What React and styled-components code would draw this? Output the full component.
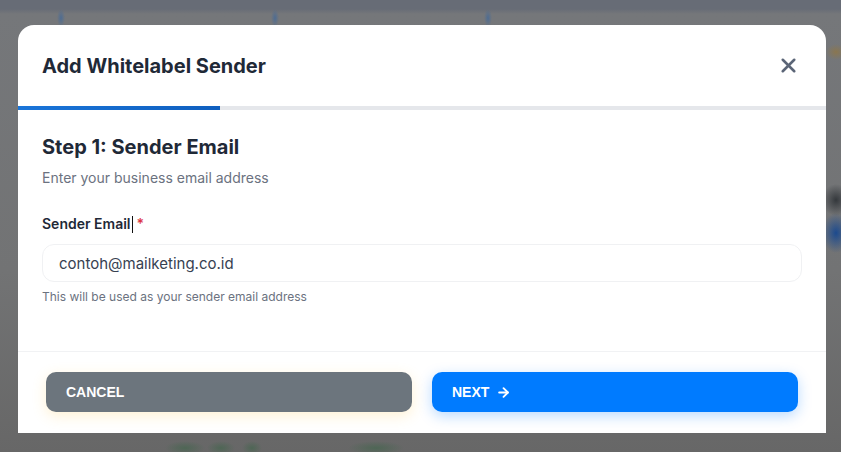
import React from 'react';
import styled, { createGlobalStyle } from 'styled-components';
import { X, ArrowRight } from 'lucide-react';

const Global = createGlobalStyle`
  html, body { margin: 0; padding: 0; }
  body { font-family: Inter, "Noto Sans", sans-serif; overflow: hidden; }
`;

// blurred page behind the dialog, only hinted with soft colour patches
const Backdrop = styled.div`
  width: 841px;
  height: 452px;
  box-sizing: border-box;
  padding: 25px 15px 0 18px;
  background:
    radial-gradient(4px 9px at 61px 18px, #4e6c92, transparent),
    radial-gradient(4px 9px at 275px 18px, #4e6c92, transparent),
    radial-gradient(4px 9px at 488px 18px, #4e6c92, transparent),
    radial-gradient(10px 8px at 836px 52px, #8a7650, transparent),
    radial-gradient(14px 16px at 836px 200px, #34383c, transparent),
    radial-gradient(14px 20px at 836px 233px, #1c4a8e, transparent),
    radial-gradient(20px 7px at 185px 448px, #4e6655, transparent),
    radial-gradient(14px 7px at 221px 448px, #4e6655, transparent),
    radial-gradient(10px 7px at 252px 448px, #4e6655, transparent),
    radial-gradient(28px 7px at 376px 448px, #4e6655, transparent),
    linear-gradient(180deg, #676c76 0px, #676c76 9px, #75777a 14px, #727374 60%, #676767 100%);
  overflow: hidden;
`;

const Modal = styled.div`
  width: 808px;
  height: 408px;
  background: #fff;
  border-radius: 16px 16px 0 0;
  overflow: hidden;
  display: flex;
  flex-direction: column;
`;

const Header = styled.div`
  height: 81px;
  display: flex;
  align-items: center;
  justify-content: space-between;
  padding: 0 26px 0 24px;
  flex-shrink: 0;
`;

const Title = styled.h2`
  margin: 0;
  font-size: 20px;
  font-weight: 700;
  color: #1f2937;
`;

const CloseButton = styled.button`
  border: 0;
  background: none;
  padding: 0;
  display: flex;
  color: #5b6577;
  cursor: pointer;
`;

const Track = styled.div`
  height: 4px;
  background: #e5e7eb;
  flex-shrink: 0;
`;

const Fill = styled.div`
  height: 100%;
  background: linear-gradient(90deg, #1a75d9, #0f5fbf);
`;

const Body = styled.div`
  height: 241px;
  box-sizing: border-box;
  padding: 23px 24px 0 24px;
  flex-shrink: 0;
`;

const StepTitle = styled.h3`
  margin: 0;
  font-size: 20px;
  line-height: 28px;
  font-weight: 700;
  color: #1f2937;
`;

const Subtitle = styled.p`
  margin: 7px 0 0;
  font-size: 14px;
  line-height: 20px;
  color: #6b7280;
`;

const Label = styled.label`
  display: flex;
  align-items: center;
  margin-top: 26px;
  font-size: 14px;
  line-height: 20px;
  font-weight: 600;
  color: #1f2937;
`;

const Caret = styled.span`
  display: inline-block;
  width: 1px;
  height: 17px;
  background: #111;
  margin-left: 1px;
`;

const Required = styled.span`
  color: #dc3545;
  margin-left: 4px;
`;

const Input = styled.input`
  display: block;
  box-sizing: border-box;
  width: 760px;
  height: 38px;
  margin-top: 10px;
  padding: 0 16px;
  border: 1px solid #f0f1f3;
  border-radius: 12px;
  font-family: Inter, sans-serif;
  font-size: 15px;
  color: #374151;
  outline: none;
  background: #fff;
`;

const Hint = styled.p`
  margin: 7px 0 0;
  font-size: 12px;
  line-height: 16px;
  color: #6b7280;
`;

const Footer = styled.div`
  border-top: 1px solid #f1f2f4;
  padding: 20px 28px 0;
  display: grid;
  grid-template-columns: 1fr 1fr;
  gap: 20px;
`;

const ActionButton = styled.button`
  height: 40px;
  border: 0;
  border-radius: 10px;
  display: flex;
  align-items: center;
  gap: 7px;
  padding: 0 20px;
  font-family: "Liberation Sans", Arial, sans-serif;
  font-weight: 700;
  font-size: 14px;
  color: #fff;
  text-transform: uppercase;
  background: ${p => (p.$primary ? '#007bff' : '#6c757d')};
  box-shadow: ${p =>
    p.$primary
      ? '0 4px 14px rgba(0, 123, 255, 0.28)'
      : '0 4px 14px rgba(255, 196, 60, 0.22)'};
`;

const step = 1;
const totalSteps = 4;

export default function App() {
  return (
    <>
      <Global />
      <Backdrop>
        <Modal>
          <Header>
            <Title>Add Whitelabel Sender</Title>
            <CloseButton aria-label="Close">
              <X size={23} strokeWidth={2.7} />
            </CloseButton>
          </Header>
          <Track>
            <Fill style={{ width: `${(step / totalSteps) * 100}%` }} />
          </Track>
          <Body>
            <StepTitle>Step 1: Sender Email</StepTitle>
            <Subtitle>Enter your business email address</Subtitle>
            <Label>
              Sender Email<Caret />
              <Required>*</Required>
            </Label>
            <Input type="email" defaultValue="contoh@mailketing.co.id" />
            <Hint>This will be used as your sender email address</Hint>
          </Body>
          <Footer>
            <ActionButton>Cancel</ActionButton>
            <ActionButton $primary>
              Next
              <ArrowRight size={15} strokeWidth={3} />
            </ActionButton>
          </Footer>
        </Modal>
      </Backdrop>
    </>
  );
}
